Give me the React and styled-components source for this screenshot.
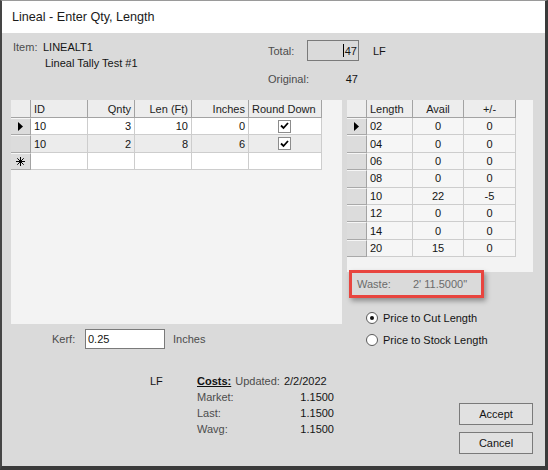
import React from 'react';
import styled, { createGlobalStyle } from 'styled-components';

const GlobalStyle = createGlobalStyle`
  html, body { margin: 0; padding: 0; background: #fff; }
  * { box-sizing: border-box; }
`;

const Window = styled.div`
  width: 548px;
  height: 470px;
  display: flex;
  flex-direction: column;
  border-top: 1px solid #9a9a9a;
  border-left: 2px solid #454545;
  border-right: 3px solid #3a3a3a;
  border-bottom: 4px solid #3a3a3a;
  font-family: "Liberation Sans", Arial, sans-serif;
  font-size: 11px;
  color: #141414;
`;

const TitleBar = styled.div`
  height: 32px;
  background: #fff;
  display: flex;
  align-items: center;
  padding-left: 10px;
  font-size: 12.6px;
  color: #1a1a1a;
`;

const Body = styled.div`
  flex: 1;
  background: #dadada;
  padding: 7px 12px 0 9px;
  display: flex;
  flex-direction: column;
`;

const Header = styled.div`
  display: flex;
  height: 60px;
`;

const ItemBlock = styled.div`
  width: 257px;
  padding-left: 2px;
  line-height: 14px;
`;

const ItemRow = styled.div`
  display: flex;
`;

const Label = styled.span`
  color: ${p => p.$muted ? '#6a6a6a' : '#4c4c4c'};
  white-space: nowrap;
`;

const ItemLabel = styled(Label)`
  width: 30px;
`;

const ItemDesc = styled.div`
  padding-left: 32px;
  margin-top: 2px;
`;

const Totals = styled.div`
  display: grid;
  grid-template-columns: 39px 52px auto;
  grid-template-rows: 21px 14px;
  row-gap: 11px;
  align-items: center;
  line-height: 14px;
`;

const TotalBox = styled.div`
  height: 21px;
  border: 1px solid #7a7a7a;
  background: #dadada;
  display: flex;
  align-items: center;
  justify-content: flex-end;
  padding-right: 1px;
`;

const Caret = styled.span`
  width: 1px;
  height: 13px;
  background: #000;
  margin-right: 1px;
`;

const Unit = styled.span`
  padding-left: 14px;
`;

const RightValue = styled.span`
  text-align: right;
  padding-right: 1px;
`;

const Main = styled.div`
  display: flex;
  gap: 5px;
`;

const Column = styled.div`
  width: ${p => p.$w}px;
  display: flex;
  flex-direction: column;
`;

const Panel = styled.div`
  height: ${p => p.$h}px;
  background: #f3f3f3;
`;

const Grid = styled.div`
  display: grid;
  grid-template-columns: ${p => p.$cols};
  grid-template-rows: 18px;
  grid-auto-rows: 17.4px;
  width: max-content;
`;

const ColHead = styled.div`
  background: #ededed;
  border-right: 1px solid #a3a3a3;
  border-bottom: 1px solid #a3a3a3;
  display: flex;
  align-items: center;
  justify-content: ${p => p.$align || 'flex-start'};
  padding: 0 3px;
  color: #1c1c1c;
  white-space: nowrap;
`;

const RowHead = styled.div`
  background: #dcdcdc;
  border-top: 1px solid #f6f6f6;
  border-right: 1px solid #a3a3a3;
  border-bottom: 1px solid #a9a9a9;
  display: flex;
  align-items: center;
  justify-content: center;
`;

const Cell = styled.div`
  background: ${p => p.$bg || '#fff'};
  border-right: 1px solid #cdcdcd;
  border-bottom: 1px solid #cdcdcd;
  display: flex;
  align-items: center;
  justify-content: ${p => p.$align || 'flex-start'};
  padding: 0 3px;
  color: #141414;
`;

const CheckBox = styled.span`
  width: 13px;
  height: 13px;
  border: 1px solid #8c8c8c;
  background: #fff;
  display: flex;
  align-items: center;
  justify-content: center;
  margin-left: -2px;
`;

const KerfRow = styled.div`
  margin-top: 5px;
  height: 20px;
  display: flex;
  align-items: center;
  padding-left: 41px;
`;

const KerfLabel = styled(Label)`
  width: 33px;
`;

const TextInput = styled.div`
  width: 80px;
  height: 20px;
  border: 1px solid #7a7a7a;
  background: #fff;
  padding: 0 2px;
  display: flex;
  align-items: center;
`;

const After = styled(Label)`
  margin-left: 8px;
`;

const WasteBox = styled.div`
  margin-top: -2px;
  margin-left: 2px;
  width: 135px;
  height: 28px;
  border: 3px solid #e8453f;
  box-shadow: 2px 3px 5px rgba(0, 0, 0, 0.35);
  display: flex;
  align-items: center;
  padding-left: 5px;
  color: #6b6b6b;
`;

const WasteLabel = styled.span`
  width: 56px;
`;

const RadioList = styled.div`
  margin-top: 11px;
  display: flex;
  flex-direction: column;
  gap: 4px;
  padding-left: 19px;
`;

const RadioRow = styled.div`
  height: 18px;
  display: flex;
  align-items: center;
`;

const RadioDot = styled.span`
  width: 12px;
  height: 12px;
  border-radius: 50%;
  border: 1px solid #5a5a5a;
  background: #fff;
  display: flex;
  align-items: center;
  justify-content: center;
  margin-right: 5px;
  &::after {
    content: '';
    width: 4px;
    height: 4px;
    border-radius: 50%;
    background: ${p => p.$on ? '#111' : 'transparent'};
  }
`;

const Bottom = styled.div`
  flex: 1;
  display: flex;
  align-items: flex-start;
`;

const CostsArea = styled.div`
  margin-top: 25px;
  padding-left: 139px;
  display: flex;
  line-height: 14px;
`;

const LFLabel = styled.span`
  width: 47px;
`;

const Costs = styled.div`
  width: 137px;
  display: grid;
  grid-template-columns: auto auto;
  row-gap: 2px;
`;

const CostsHead = styled.div`
  grid-column: 1 / 3;
  display: flex;
  gap: 4px;
`;

const CostsTitle = styled.span`
  font-weight: bold;
  text-decoration: underline;
  color: #111;
`;

const CostValue = styled.span`
  text-align: right;
`;

const Buttons = styled.div`
  margin-left: auto;
  margin-top: 54px;
  display: flex;
  flex-direction: column;
  gap: 7px;
`;

const Button = styled.button`
  width: 74px;
  height: 22px;
  background: #e1e1e1;
  border: 1px solid #7a7a7a;
  font-family: inherit;
  font-size: 11px;
  color: #141414;
  padding: 0;
`;

const Arrow = () => (
  <svg width="5" height="9" viewBox="0 0 5 9"><path d="M0 0 L5 4.5 L0 9 Z" fill="#000" /></svg>
);

const Star = () => (
  <svg width="9" height="9" viewBox="0 0 9 9" stroke="#000" strokeWidth="1">
    <path d="M4.5 0 V9 M0 4.5 H9 M1.3 1.3 L7.7 7.7 M7.7 1.3 L1.3 7.7" />
  </svg>
);

const Check = () => (
  <svg width="9" height="8" viewBox="0 0 9 8">
    <path d="M1 3.5 L3.5 6 L8 1" fill="none" stroke="#000" strokeWidth="1.8" />
  </svg>
);

const tally = [
  { id: '10', qty: 3, len: 10, inches: 0, bg: '#fff', current: true },
  { id: '10', qty: 2, len: 8, inches: 6, bg: '#ececec' },
];

const stock = [
  ['02', 0, 0], ['04', 0, 0], ['06', 0, 0], ['08', 0, 0],
  ['10', 22, -5], ['12', 0, 0], ['14', 0, 0], ['20', 15, 0],
];

const costs = [['Market:', '1.1500'], ['Last:', '1.1500'], ['Wavg:', '1.1500']];

export default function App() {
  return (
    <Window>
      <GlobalStyle />
      <TitleBar>Lineal - Enter Qty, Length</TitleBar>
      <Body>
        <Header>
          <ItemBlock>
            <ItemRow>
              <ItemLabel>Item:</ItemLabel>
              <span>LINEALT1</span>
            </ItemRow>
            <ItemDesc>Lineal Tally Test #1</ItemDesc>
          </ItemBlock>
          <Totals>
            <Label>Total:</Label>
            <TotalBox><Caret />47</TotalBox>
            <Unit>LF</Unit>
            <Label>Original:</Label>
            <RightValue>47</RightValue>
            <span />
          </Totals>
        </Header>

        <Main>
          <Column $w={331}>
            <Panel $h={224}>
              <Grid $cols="20px 57px 47px 57px 57px 73px">
                <ColHead />
                <ColHead>ID</ColHead>
                <ColHead $align="flex-end">Qnty</ColHead>
                <ColHead $align="flex-end">Len (Ft)</ColHead>
                <ColHead $align="flex-end">Inches</ColHead>
                <ColHead>Round Down</ColHead>
                {tally.map((r, i) => (
                  <React.Fragment key={i}>
                    <RowHead>{r.current && <Arrow />}</RowHead>
                    <Cell $bg={r.bg}>{r.id}</Cell>
                    <Cell $bg={r.bg} $align="flex-end">{r.qty}</Cell>
                    <Cell $bg={r.bg} $align="flex-end">{r.len}</Cell>
                    <Cell $bg={r.bg} $align="flex-end">{r.inches}</Cell>
                    <Cell $bg={r.bg} $align="center"><CheckBox><Check /></CheckBox></Cell>
                  </React.Fragment>
                ))}
                <RowHead><Star /></RowHead>
                <Cell /><Cell /><Cell /><Cell /><Cell />
              </Grid>
            </Panel>
            <KerfRow>
              <KerfLabel>Kerf:</KerfLabel>
              <TextInput>0.25</TextInput>
              <After>Inches</After>
            </KerfRow>
          </Column>

          <Column $w={186}>
            <Panel $h={172}>
              <Grid $cols="20px 46px 51px 52px">
                <ColHead />
                <ColHead>Length</ColHead>
                <ColHead $align="center">Avail</ColHead>
                <ColHead $align="center">+/-</ColHead>
                {stock.map(([len, avail, diff], i) => (
                  <React.Fragment key={len}>
                    <RowHead>{i === 0 && <Arrow />}</RowHead>
                    <Cell $bg="#f6f6f6">{len}</Cell>
                    <Cell $bg="#f6f6f6" $align="center">{avail}</Cell>
                    <Cell $bg="#f6f6f6" $align="center">{diff}</Cell>
                  </React.Fragment>
                ))}
              </Grid>
            </Panel>
            <WasteBox>
              <WasteLabel>Waste:</WasteLabel>
              <span>2' 11.5000"</span>
            </WasteBox>
            <RadioList>
              <RadioRow><RadioDot $on />Price to Cut Length</RadioRow>
              <RadioRow><RadioDot />Price to Stock Length</RadioRow>
            </RadioList>
          </Column>
        </Main>

        <Bottom>
          <CostsArea>
            <LFLabel>LF</LFLabel>
            <Costs>
              <CostsHead>
                <CostsTitle>Costs:</CostsTitle>
                <Label>Updated:</Label>
                <span>2/2/2022</span>
              </CostsHead>
              {costs.map(([k, v]) => (
                <React.Fragment key={k}>
                  <Label>{k}</Label>
                  <CostValue>{v}</CostValue>
                </React.Fragment>
              ))}
            </Costs>
          </CostsArea>
          <Buttons>
            <Button>Accept</Button>
            <Button>Cancel</Button>
          </Buttons>
        </Bottom>
      </Body>
    </Window>
  );
}
